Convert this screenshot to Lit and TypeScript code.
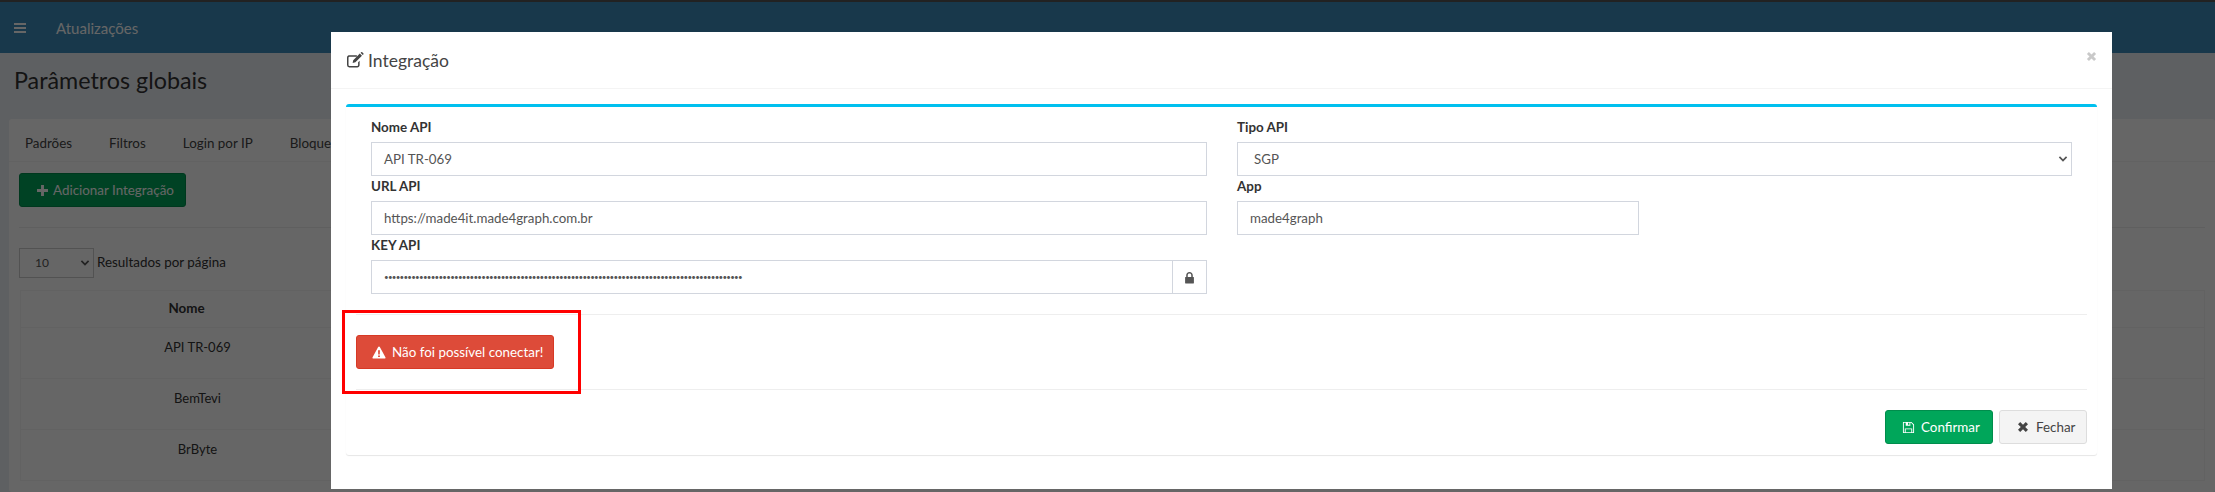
import { LitElement, html, css, svg } from "lit";
import { customElement } from "lit/decorators.js";

const FONT = css`"Lato", "Noto Sans", sans-serif`;

const icons = {
  edit: svg`<path d="M3 3.5h8.5v1.6H3.6c-.6 0-1 .4-1 1v7.7c0 .6.4 1 1 1h8.2c.6 0 1-.4 1-1v-3l1.6-1.6v4.7c0 1.4-1.1 2.5-2.5 2.5H3.5A2.5 2.5 0 0 1 1 13.9V6c0-1.4.9-2.5 2-2.5z" fill="currentColor"/><path d="M14.6 1.6 16.9 4l-7 7-2.9.6.6-2.9zM15.4.9l.8-.7c.3-.3.7-.3 1 0l1.3 1.3c.3.3.3.7 0 1l-.8.8z" fill="currentColor"/>`,
  bars: svg`<path d="M0 0h12v2H0zM0 4h12v2H0zM0 8h12v2H0z" fill="currentColor"/>`,
  plus: svg`<path d="M4.4 0h3.2v4.4H12v3.2H7.6V12H4.4V7.6H0V4.4h4.4z" fill="currentColor"/>`,
  warn: svg`<path fill-rule="evenodd" d="M7 .6c.4 0 .7.2.9.5l6 11c.4.7-.1 1.4-.9 1.4H1c-.8 0-1.3-.7-.9-1.4l6-11c.2-.3.5-.5.9-.5zM6 4.6l.2 4.6h1.6L8 4.6zm0 5.6v1.7h2v-1.7z" fill="currentColor"/>`,
  save: svg`<path fill-rule="evenodd" d="M1.4 1h8.8L13 3.8v8.8c0 .2-.2.4-.4.4H1.4a.4.4 0 0 1-.4-.4V1.4c0-.2.2-.4.4-.4zm.6 1v10h1V8h8v4h1V4.2L9.8 2H9v3H4V2zm2 7v3h6V9zM6.5 2v2H8V2z" fill="currentColor"/>`,
  times: svg`<path d="M3.2 1 6 3.8 8.8 1 11 3.2 8.2 6 11 8.8 8.8 11 6 8.2 3.2 11 1 8.8 3.8 6 1 3.2z" fill="currentColor"/>`,
  lock: svg`<path fill-rule="evenodd" d="M2 5V3.6C2 1.6 3.3.5 5 .5s3 1.1 3 3.1V5h.6c.3 0 .4.2.4.4v5.2c0 .2-.1.4-.4.4H1.4c-.3 0-.4-.2-.4-.4V5.4c0-.2.1-.4.4-.4zm1.4 0h3.2V3.6C6.6 2.5 6 1.9 5 1.9s-1.6.6-1.6 1.7z" fill="currentColor"/>`,
  chev: svg`<path d="M1 3.2 2.4 1.8 6 5.4l3.6-3.6L11 3.2 6 8.2z" fill="currentColor"/>`,
};

@customElement("app-root")
export class AppRoot extends LitElement {
  static styles = css`
    :host {
      display: block;
      position: relative;
      width: 2215px;
      height: 492px;
      overflow: hidden;
      background: #ecf0f5;
      font-family: ${FONT};
      font-size: 13.4px;
      color: #333;
    }
    * { box-sizing: border-box; }
    svg { display: block; flex: none; }

    .strip { height: 2px; background: #555; }
    .topbar {
      height: 51px;
      background: #3c8dbc;
      color: #fff;
      display: flex;
      align-items: center;
      padding-left: 14px;
      gap: 30px;
      font-size: 15px;
    }
    .page-title {
      margin: 0;
      font-size: 23.3px;
      font-weight: 400;
      line-height: 30px;
      padding: 12px 14px 0;
      height: 66px;
    }
    .panel {
      margin-left: 9px;
      background: #fff;
      height: 373px;
      border-radius: 3px;
    }
    .tabs {
      display: flex;
      height: 43px;
      align-items: center;
      padding: 5px 0 0 16px;
      gap: 37px;
      border-bottom: 1px solid #f4f4f4;
      color: #444;
    }
    .panel-body { padding: 11px 10px 0; }
    .add {
      display: inline-flex;
      align-items: center;
      gap: 5px;
      height: 34px;
      width: 167px;
      padding-left: 17px;
      background: #00a65a;
      border: 1px solid #008d4c;
      border-radius: 3px;
      color: #fff;
    }
    .rule { height: 1px; background: #eee; margin-top: 20px; }
    .per-page {
      display: flex;
      align-items: flex-start;
      gap: 3px;
      margin-top: 20px;
      line-height: 28px;
    }
    .mini-select {
      width: 75px;
      height: 30px;
      border: 1px solid #ccc;
      display: flex;
      align-items: center;
      justify-content: space-between;
      padding: 0 3px 0 15px;
      font-size: 12px;
      color: #555;
    }
    table {
      margin: 12px 0 0 1px;
      width: calc(100% - 1px);
      table-layout: fixed;
      border-collapse: collapse;
    }
    th, td { border: 1px solid #f4f4f4; text-align: center; font-weight: 400; padding: 0; }
    thead th { height: 37px; font-weight: 700; background: #fff; padding: 0 22px 2px 0; }
    tbody td { height: 51px; padding-bottom: 13px; font-size: 13px; }
    .name-col { width: 354px; }

    .backdrop {
      position: absolute;
      inset: 0;
      background: rgba(0, 0, 0, 0.6);
    }
    .modal {
      position: absolute;
      left: 331px;
      top: 32px;
      width: 1781px;
      height: 457px;
      background: #fff;
      display: flex;
      flex-direction: column;
    }
    .modal-head {
      height: 57px;
      flex: none;
      border-bottom: 1px solid #f4f4f4;
      padding: 0 15px;
      display: flex;
      align-items: center;
      gap: 4px;
      font-size: 17.5px;
      color: #444;
    }
    .modal-head .title { flex: 1; }
    .close { color: #c9c9c9; margin-top: -7px; margin-right: 0; }
    .box {
      margin: 15px 15px 0;
      height: 351px;
      border-top: 3px solid #00c0ef;
      border-radius: 3px;
      box-shadow: 0 1px 1px rgba(0, 0, 0, 0.1);
      padding: 0 10px;
      display: flex;
      flex-direction: column;
    }
    .form {
      display: grid;
      grid-template-columns: 836px 835px;
      column-gap: 30px;
      margin: 0 15px;
      padding-top: 17px;
    }
    .col { display: flex; flex-direction: column; }
    .field { display: flex; flex-direction: column; height: 59px; }
    label {
      font-weight: 700;
      line-height: 18px;
      height: 18px;
      margin: -6px 0 6px;
      color: #333;
    }
    .input {
      height: 34px;
      border: 1px solid #d2d6de;
      display: flex;
      align-items: center;
      padding: 0 12px;
      color: #555;
      background: #fff;
      font-size: 13.3px;
    }
    .select { justify-content: space-between; padding: 0 3px 0 16px; }
    .app { width: 402px; }
    .group { display: flex; }
    .group .input:first-child { flex: 1; border-right: 0; }
    .addon { width: 35px; justify-content: center; padding: 0; }
    .dots { font-size: 8px; letter-spacing: -0.75px; line-height: 1; }
    hr { border: 0; height: 1px; background: #eee; margin: 0; flex: none; }
    .hr1 { margin-top: 13px; }
    .status { height: 74px; display: flex; align-items: center; }
    .error {
      display: flex;
      align-items: center;
      gap: 6px;
      width: 198px;
      height: 34px;
      padding-left: 15px;
      background: #dd4b39;
      border: 1px solid #d73925;
      border-radius: 3px;
      color: #fff;
    }
    .actions {
      display: flex;
      justify-content: flex-end;
      gap: 6px;
      padding-top: 20px;
    }
    .btn {
      height: 34px;
      display: flex;
      align-items: center;
      border-radius: 3px;
    }
    .confirm {
      width: 108px;
      padding-left: 16px;
      gap: 6px;
      background: #00a65a;
      border: 1px solid #008d4c;
      color: #fff;
    }
    .dismiss {
      width: 88px;
      padding-left: 17px;
      gap: 7px;
      background: #f4f4f4;
      border: 1px solid #ddd;
      color: #444;
    }
    .callout {
      position: absolute;
      left: 342px;
      top: 310px;
      width: 239px;
      height: 84px;
      border: 3px solid #f00;
    }
  `;

  private icon(body: unknown, w: number, h: number, vb: string) {
    return html`<svg width=${w} height=${h} viewBox=${vb} aria-hidden="true">${body}</svg>`;
  }

  render() {
    const dots = "•".repeat(92);
    return html`
      <div class="strip"></div>
      <header class="topbar">
        ${this.icon(icons.bars, 12, 10, "0 0 12 10")}
        <span>Atualizações</span>
      </header>
      <h1 class="page-title">Parâmetros globais</h1>
      <section class="panel">
        <nav class="tabs">
          <span>Padrões</span><span>Filtros</span><span>Login por IP</span><span>Bloqueios</span>
        </nav>
        <div class="panel-body">
          <div class="add">${this.icon(icons.plus, 11, 11, "0 0 12 12")}<span>Adicionar Integração</span></div>
          <div class="rule"></div>
          <div class="per-page">
            <div class="mini-select"><span>10</span>${this.icon(icons.chev, 10, 10, "0 0 12 10")}</div>
            <span>Resultados por página</span>
          </div>
          <table>
            <colgroup><col class="name-col" /><col /></colgroup>
            <thead><tr><th>Nome</th><th></th></tr></thead>
            <tbody>
              <tr><td>API TR-069</td><td></td></tr>
              <tr><td>BemTevi</td><td></td></tr>
              <tr><td>BrByte</td><td></td></tr>
            </tbody>
          </table>
        </div>
      </section>

      <div class="backdrop"></div>

      <div class="modal">
        <div class="modal-head">
          ${this.icon(icons.edit, 18, 16, "0 0 19 17")}
          <span class="title">Integração</span>
          <span class="close">${this.icon(icons.times, 11, 11, "0 0 12 12")}</span>
        </div>
        <div class="box">
          <div class="form">
            <div class="col">
              <div class="field"><label>Nome API</label><div class="input">API TR-069</div></div>
              <div class="field"><label>URL API</label><div class="input">https://made4it.made4graph.com.br</div></div>
              <div class="field">
                <label>KEY API</label>
                <div class="group">
                  <div class="input"><span class="dots">${dots}</span></div>
                  <div class="input addon">${this.icon(icons.lock, 11, 13, "0 0 10 11")}</div>
                </div>
              </div>
            </div>
            <div class="col">
              <div class="field">
                <label>Tipo API</label>
                <div class="input select"><span>SGP</span>${this.icon(icons.chev, 10, 10, "0 0 12 10")}</div>
              </div>
              <div class="field"><label>App</label><div class="input app">made4graph</div></div>
            </div>
          </div>
          <hr class="hr1" />
          <div class="status">
            <div class="error">${this.icon(icons.warn, 14, 13, "0 0 14 14")}<span>Não foi possível conectar!</span></div>
          </div>
          <hr />
          <div class="actions">
            <div class="btn confirm">${this.icon(icons.save, 13, 13, "0 0 14 14")}<span>Confirmar</span></div>
            <div class="btn dismiss">${this.icon(icons.times, 12, 12, "0 0 12 12")}<span>Fechar</span></div>
          </div>
        </div>
      </div>

      <div class="callout"></div>
    `;
  }
}
